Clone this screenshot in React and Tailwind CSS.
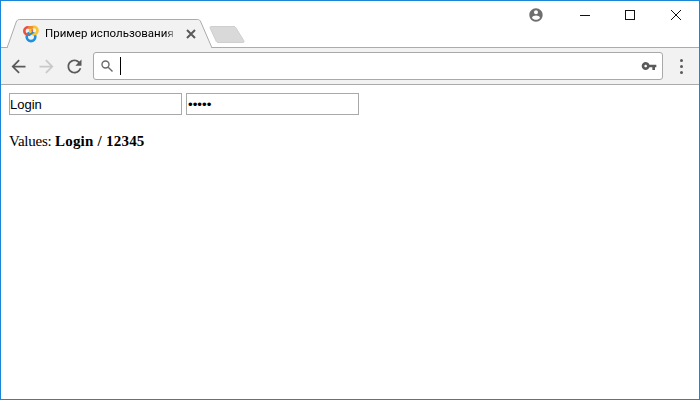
const Icon = ({ d, size = 24, className = "" }) => (
  <svg width={size} height={size} viewBox="0 0 24 24" className={className} fill="currentColor">
    <path d={d} />
  </svg>
);

const BACK = "M20 11H7.83l5.59-5.59L12 4l-8 8 8 8 1.41-1.41L7.83 13H20v-2z";
const FORWARD = "M4 11h12.17l-5.59-5.59L12 4l8 8-8 8-1.41-1.41L16.17 13H4v-2z";
const RELOAD =
  "M17.65 6.35C16.2 4.9 14.21 4 12 4c-4.42 0-7.99 3.58-7.99 8s3.57 8 7.99 8c3.73 0 6.84-2.55 7.73-6h-2.08c-.82 2.33-3.04 4-5.65 4-3.31 0-6-2.69-6-6s2.69-6 6-6c1.66 0 3.14.69 4.22 1.78L13 11h7V4l-2.35 2.35z";
const KEY =
  "M12.65 10C11.83 7.67 9.61 6 7 6c-3.31 0-6 2.69-6 6s2.69 6 6 6c2.61 0 4.83-1.67 5.65-4H17v4h4v-4h2v-4H12.65zM7 14c-1.1 0-2-.9-2-2s.9-2 2-2 2 .9 2 2-.9 2-2 2z";
const ACCOUNT =
  "M12 2C6.48 2 2 6.48 2 12s4.48 10 10 10 10-4.48 10-10S17.52 2 12 2zm0 3c1.66 0 3 1.34 3 3s-1.34 3-3 3-3-1.34-3-3 1.34-3 3-3zm0 14.2c-2.5 0-4.71-1.28-6-3.22.03-1.99 4-3.08 6-3.08 1.99 0 5.97 1.09 6 3.08-1.29 1.94-3.5 3.22-6 3.22z";

const Logo = () => (
  <svg width="16" height="18" viewBox="0 0 16 18" fill="none" strokeWidth="2.6">
    <circle cx="8" cy="11.800" r="4.300" stroke="#1f8fe0" />
    <circle cx="5" cy="6" r="3.700" stroke="#e8533f" />
    <circle cx="10.800" cy="5.600" r="3.700" stroke="#f7c531" />
    <path d="M5.500 3c1.800-1.200 3-1 4.500-.3" stroke="#f08a2c" />
    <path d="M5.500 10.500l4.500-3" stroke="#1f8fe0" strokeWidth="2" />
  </svg>
);

const Tab = () => (
  <div className="relative mb-[-1px] flex h-[29px] w-[207px] items-center pl-[17px] pt-[1px]">
    <svg width="207" height="29" viewBox="0 0 207 29" className="absolute inset-0">
      <path
        d="M1 29L10.200 3c.5-1.600 1.800-2.500 3.300-2.500h178c1.500 0 2.800.9 3.300 2.500L206 29"
        fill="#f2f2f2"
        stroke="#ababab"
      />
    </svg>
    <div className="relative flex items-center">
      <Logo />
      <span className="ml-[6px] w-[132px] overflow-hidden whitespace-nowrap text-[11.500px] text-black [font-family:Roboto,sans-serif] [mask-image:linear-gradient(to_right,black_92%,transparent)]">
        Пример использования
      </span>
      <svg width="10" height="10" viewBox="0 0 10 10" className="ml-[9px]" stroke="#5a5a5a" strokeWidth="2">
        <path d="M1 1l8 8M9 1l-8 8" />
      </svg>
    </div>
  </div>
);

const NewTab = () => (
  <svg width="36" height="18" viewBox="0 0 36 18" className="ml-[-4px] mb-[3px]">
    <path
      d="M1 1.500C1 .8 1.500.5 2 .5h23c.8 0 1.300.4 1.700 1L35 15c.4.8 0 1.500-1 1.500H9c-.8 0-1.300-.3-1.700-1L1.300 2.500C1 2 1 1.800 1 1.500z"
      fill="#d9d9d9"
      stroke="#cfcfcf"
    />
  </svg>
);

const WindowControls = () => (
  <div className="ml-auto flex self-start text-black">
    <Icon d={ACCOUNT} size={16} className="mt-[6px] mr-[35px] text-[#6f6f6f]" />
    <svg width="12" height="12" viewBox="0 0 12 12" className="mt-[8px]" stroke="#111" fill="none">
      <path d="M1 6.500h10" />
    </svg>
    <svg width="12" height="12" viewBox="0 0 12 12" className="mt-[8px] ml-[33px]" stroke="#111" fill="none">
      <rect x="1.500" y="1.500" width="9" height="9" />
    </svg>
    <svg width="12" height="12" viewBox="0 0 12 12" className="mt-[8px] ml-[34px] mr-[17px]" stroke="#111" fill="none">
      <path d="M1 1l10 10M11 1L1 11" />
    </svg>
  </div>
);

const Toolbar = () => (
  <div className="flex h-[37px] items-center border-b border-[#ababab] bg-[#f2f2f2] pl-[7px]">
    <Icon d={BACK} size={21} className="text-[#5a5a5a]" />
    <Icon d={FORWARD} size={21} className="ml-[7px] text-[#c9c9c9]" />
    <Icon d={RELOAD} size={21} className="ml-[7px] text-[#5a5a5a]" />
    <div className="ml-[8px] flex h-[28px] w-[570px] items-center rounded-[3px] border border-[#a9a9a9] bg-white pl-[6px] pr-[5px]">
      <svg width="14" height="14" viewBox="0 0 14 14" fill="none" stroke="#6a6a6a" strokeWidth="1.400">
        <circle cx="5.500" cy="5.500" r="3.500" />
        <path d="M8.200 8.200l4.300 4.300" />
      </svg>
      <div className="ml-[6px] h-[18px] w-px bg-black" />
      <Icon d={KEY} size={16} className="ml-auto text-[#5a5a5a]" />
    </div>
    <div className="ml-[17px] flex flex-col gap-[3px]">
      <div className="h-[3px] w-[3px] rounded-full bg-[#5a5a5a]" />
      <div className="h-[3px] w-[3px] rounded-full bg-[#5a5a5a]" />
      <div className="h-[3px] w-[3px] rounded-full bg-[#5a5a5a]" />
    </div>
  </div>
);

export default function App() {
  return (
    <div className="flex h-[400px] w-[700px] flex-col overflow-hidden border border-[#1a86d8] bg-white">
      <div className="flex h-[47px] items-end border-b border-[#ababab] pl-[5px]">
        <Tab />
        <NewTab />
        <WindowControls />
      </div>
      <Toolbar />
      <div className="flex-1 p-[8px] text-[15px] text-black [font-family:'Liberation_Serif',serif]">
        <div className="flex gap-[4px]">
          <input
            readOnly
            value="Login"
            className="h-[22px] w-[173px] border border-[#a9a9a9] px-0 text-[13px] outline-none [font-family:'Liberation_Sans',sans-serif]"
          />
          <input
            readOnly
            type="password"
            value="12345"
            className="h-[22px] w-[173px] border border-[#a9a9a9] px-px text-[13.333px] outline-none [font-family:'Liberation_Sans',sans-serif]"
          />
        </div>
        <p className="mt-[15px]">
          <span className="tracking-[-0.25px]">Values: </span>
          <b className="tracking-[0.23px]">Login / 12345</b>
        </p>
      </div>
    </div>
  );
}
